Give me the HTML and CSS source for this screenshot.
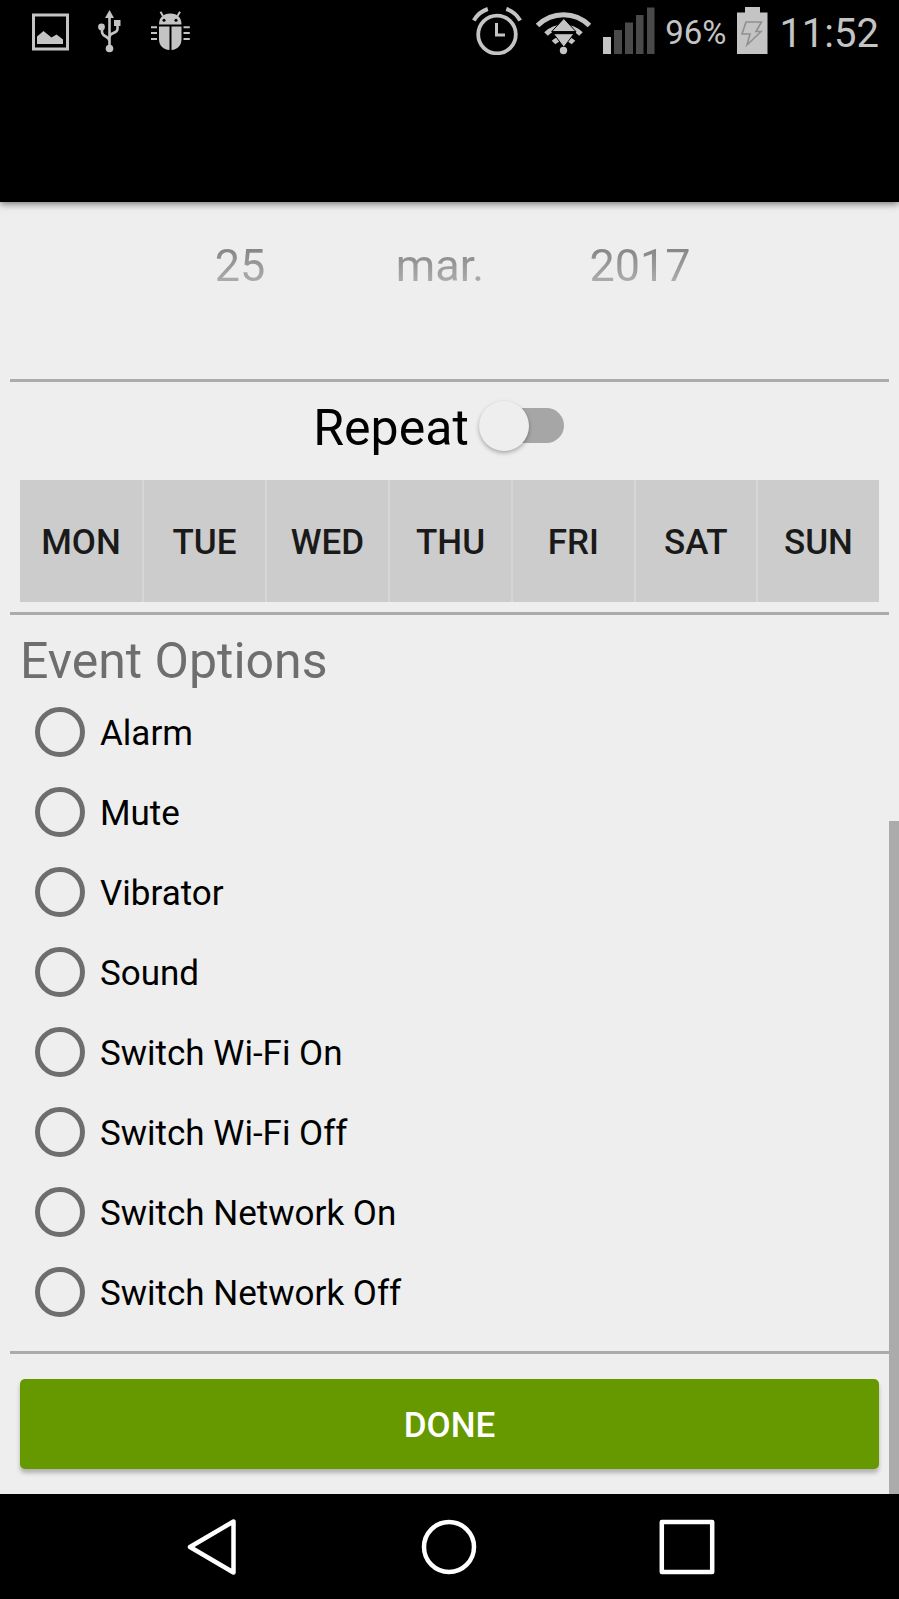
FILE: index.html
```html
<!DOCTYPE html>
<html lang="en">
<head>
    <meta charset="UTF-8">
    <meta name="viewport" content="width=device-width, initial-scale=1.0">
    <title>Event Options</title>
    <link rel="stylesheet" href="styles.css">
</head>
<body>

    <header class="app-bar">
        <div class="status-bar">
            <div class="notifications">
                <!-- Picture -->
                <svg class="picture" width="37" height="38" viewBox="0 0 37 38">
                    <path d="M1.500 2h34v34h-34z" fill="none" stroke="#c4c4c4" stroke-width="3"/>
                    <path d="M5 31V23.500l6.500-5.500 8 6.500 5-3 6.500 5V31z" fill="#c4c4c4"/>
                </svg>
                <!-- USB -->
                <svg class="usb" width="24" height="44" viewBox="0 0 24 44">
                    <path d="M11.500 6v32M4 17v5c0 5 7.500 4 7.500 9M19.500 13v6c0 5-8 3-8 8" fill="none" stroke="#c4c4c4" stroke-width="2.600"/>
                    <path d="M11.500 0l4.500 8h-9zM16 10h6.500v6H16z" fill="#c4c4c4"/>
                    <circle cx="3.500" cy="17" r="3.400" fill="#c4c4c4"/>
                    <circle cx="11.500" cy="38.500" r="3.800" fill="#c4c4c4"/>
                </svg>
                <!-- Debug -->
                <svg class="bug" width="40" height="40" viewBox="0 0 40 40">
                    <path d="M8 13.500c0-7 4-11 11.300-11s11.200 4 11.200 11z" fill="#c4c4c4"/>
                    <path d="M12 5L9.500.8M26.500 5L29 .8" stroke="#c4c4c4" stroke-width="2"/>
                    <path d="M8 15.500h10.500v23.500C12 38.500 8 34.500 8 28zM20.500 15.500h10V28c0 6.500-4 10.500-10 11z" fill="#c4c4c4"/>
                    <path d="M0 16.200h6M0 22h6M0 28h6M32.500 16.200h6.300M32.500 22h6.300M32.500 28h6.300" stroke="#c4c4c4" stroke-width="2"/>
                    <circle cx="13" cy="9.300" r="1.500"/>
                    <circle cx="25" cy="9.300" r="1.500"/>
                </svg>
            </div>
            <div class="system">
                <!-- Alarm -->
                <svg class="alarm" width="50" height="48" viewBox="0 0 50 48">
                    <circle cx="25" cy="27.500" r="18.800" fill="none" stroke="#c4c4c4" stroke-width="3.800"/>
                    <path d="M24.500 16v12h8.500" fill="none" stroke="#c4c4c4" stroke-width="3"/>
                    <path d="M1.800 13.500C5 8 9.500 4 15.800 2M34.300 2C40.500 4 45 8 48.200 13.500" fill="none" stroke="#c4c4c4" stroke-width="4"/>
                </svg>
                <!-- Wi-Fi -->
                <svg class="wifi" width="55" height="43" viewBox="0 0 55 43">
                    <path d="M1.500 13.500C16-1 39-1 53.500 13.500M10 22C19.500 12.500 35.500 12.500 45 22M17.500 30.500C23 25 32 25 37.500 30.500" fill="none" stroke="#c4c4c4" stroke-width="5"/>
                    <path d="M27.800 6.500L40 19.700H15.600zM27.800 35.200L17.500 21.700H38z" fill="#c4c4c4" stroke="#000" stroke-width="1"/>
                    <path d="M16 20.500h24" stroke="#000" stroke-width="2.500"/>
                    <circle cx="27.500" cy="38.500" r="3.700" fill="#c4c4c4"/>
                </svg>
                <!-- Signal -->
                <svg class="signal" width="52" height="47" viewBox="0 0 52 47">
                    <path d="M0 30h8v17H0z" fill="#c4c4c4"/>
                    <path d="M11 23h8v24h-8zM22 15.500h8V47h-8zM33 8h7.500v39H33zM44 .5h7.500V47H44z" fill="#4a4a4a"/>
                </svg>
                <span class="percent">96%</span>
                <!-- Battery -->
                <svg class="battery" width="31" height="47" viewBox="0 0 31 47">
                    <path d="M0 5.500h8V0h15v5.500h7.500V47H0z" fill="#c4c4c4"/>
                    <path d="M9 15h15.500L19 24.500h5L10 38l3-11H5z" fill="none" stroke="#909090" stroke-width="1.600"/>
                </svg>
                <span class="clock">11:52</span>
            </div>
        </div>
    </header>

    <main class="content">
        <div class="date-picker">
            <span>25</span>
            <span>mar.</span>
            <span>2017</span>
        </div>

        <div class="divider"></div>

        <div class="repeat">
            <span class="repeat-label">Repeat</span>
            <div class="switch"><div class="thumb"></div></div>
        </div>

        <div class="days">
            <button>MON</button>
            <button>TUE</button>
            <button>WED</button>
            <button>THU</button>
            <button>FRI</button>
            <button>SAT</button>
            <button>SUN</button>
        </div>

        <div class="divider"></div>

        <h2>Event Options</h2>

        <div class="options">
            <label><input type="radio" name="event"><span>Alarm</span></label>
            <label><input type="radio" name="event"><span>Mute</span></label>
            <label><input type="radio" name="event"><span>Vibrator</span></label>
            <label><input type="radio" name="event"><span>Sound</span></label>
            <label><input type="radio" name="event"><span>Switch Wi-Fi On</span></label>
            <label><input type="radio" name="event"><span>Switch Wi-Fi Off</span></label>
            <label><input type="radio" name="event"><span>Switch Network On</span></label>
            <label><input type="radio" name="event"><span>Switch Network Off</span></label>
        </div>

        <div class="divider"></div>

        <button class="done">DONE</button>

        <div class="scrollbar"></div>
    </main>

    <nav class="nav-bar">
        <svg width="56" height="56" viewBox="0 0 56 56">
            <path d="M7 28L50.500 2.500v51z"/>
        </svg>
        <svg width="56" height="56" viewBox="0 0 56 56">
            <circle cx="28" cy="28" r="25"/>
        </svg>
        <svg width="56" height="56" viewBox="0 0 56 56">
            <path d="M2.800 3h50.400v50H2.800z"/>
        </svg>
    </nav>

</body>
</html>
```

FILE: styles.css
```css
/* Basis */
* {
    box-sizing: border-box;
}

body {
    display: flex;
    flex-direction: column;
    height: 1599px;
    margin: 0;
    background-color: #eeeeee;
    font-family: Roboto, sans-serif;
    overflow: hidden;
}

button {
    border: none;
    padding: 2px 0 0;
    font-family: inherit;
    font-size: 35px;
    font-weight: 500;
}

svg {
    display: block;
    flex-shrink: 0;
}

/* Header */
.app-bar {
    position: relative;
    z-index: 1;
    height: 202px;
    background-color: #000;
    box-shadow: 0 2px 7px rgba(0, 0, 0, 0.5);
}

.status-bar {
    display: flex;
    justify-content: space-between;
    height: 64px;
    padding: 0 20px 0 31.5px;
    color: #c4c4c4;
}

.notifications, .system {
    display: flex;
    align-items: center;
}

.picture {
    margin-bottom: 1px;
}

.usb {
    margin-left: 29px;
    margin-bottom: 1px;
}

.bug {
    margin-left: 29px;
    margin-bottom: 3px;
}

.alarm {
    margin-bottom: 2px;
}

.wifi {
    margin-left: 14px;
    margin-top: 2px;
}

.signal {
    margin-left: 12px;
    margin-bottom: 3px;
}

.percent {
    margin-left: 10px;
    padding-top: 2px;
    font-size: 33px;
    line-height: 64px;
}

.battery {
    margin-left: 11px;
    margin-bottom: 3px;
}

.clock {
    margin-left: 11px;
    padding-top: 3px;
    font-size: 40px;
    line-height: 64px;
}

/* Content */
.content {
    position: relative;
    height: 1292px;
    padding: 0 10px;
}

.divider {
    height: 3px;
    background-color: #ababab;
}

.date-picker {
    display: grid;
    grid-template-columns: repeat(3, 200px);
    justify-content: center;
    height: 177px;
    padding-top: 38px;
    padding-right: 19px;
    font-size: 45px;
    line-height: 52px;
    text-align: center;
}

.date-picker span {
    height: 52px;
    background-image: linear-gradient(#7c7c7c, #b8b8b8);
    background-clip: text;
    -webkit-background-clip: text;
    color: transparent;
}

.repeat {
    display: flex;
    align-items: center;
    justify-content: center;
    gap: 10px;
    height: 87px;
    margin-bottom: 11px;
    padding-right: 22px;
}

.repeat-label {
    padding-top: 4px;
    font-size: 50px;
    line-height: 60px;
}

.switch {
    display: flex;
    align-items: center;
    width: 85px;
    height: 35px;
    border-radius: 18px;
    background: linear-gradient(to right, transparent 25px, #a6a6a6 25px);
}

.thumb {
    width: 50px;
    height: 50px;
    border-radius: 50%;
    background-color: #eee;
    box-shadow: 0 2px 4px rgba(0, 0, 0, 0.3);
}

.days {
    display: grid;
    grid-template-columns: 122px repeat(3, 121px) repeat(2, 120.5px) 1fr;
    gap: 2px;
    height: 122px;
    margin: 0 10px 10px;
    background-color: #d6d6d6;
}

.days button {
    background-color: #cccccc;
    color: #1a1a1a;
}

h2 {
    margin: 0;
    padding: 15px 10px 0;
    height: 77px;
    color: #6e6e6e;
    font-size: 50px;
    font-weight: 400;
    line-height: 62px;
}

.options {
    height: 659px;
}

.options label {
    display: flex;
    align-items: center;
    height: 80px;
    padding-left: 25px;
    font-size: 35px;
}

.options input {
    appearance: none;
    width: 50px;
    height: 50px;
    margin: 0 15px 0 0;
    border: 5px solid #6e6e6e;
    border-radius: 50%;
}

.options span {
    padding-top: 3px;
}

.done {
    display: block;
    width: 859px;
    height: 90px;
    margin: 25px 10px 0;
    border-radius: 5px;
    background-color: #669900;
    box-shadow: 0 4px 4px rgba(0, 0, 0, 0.25);
    color: #fff;
}

.scrollbar {
    position: absolute;
    top: 619px;
    right: 0;
    bottom: 0;
    width: 10px;
    background-color: #ababab;
}

/* Navigation */
.nav-bar {
    display: flex;
    justify-content: center;
    gap: 182px;
    height: 105px;
    padding-top: 24.5px;
    padding-right: 2px;
    background-color: #000;
}

.nav-bar svg {
    fill: none;
    stroke: #fff;
    stroke-width: 4.5;
    stroke-linejoin: round;
}
```
